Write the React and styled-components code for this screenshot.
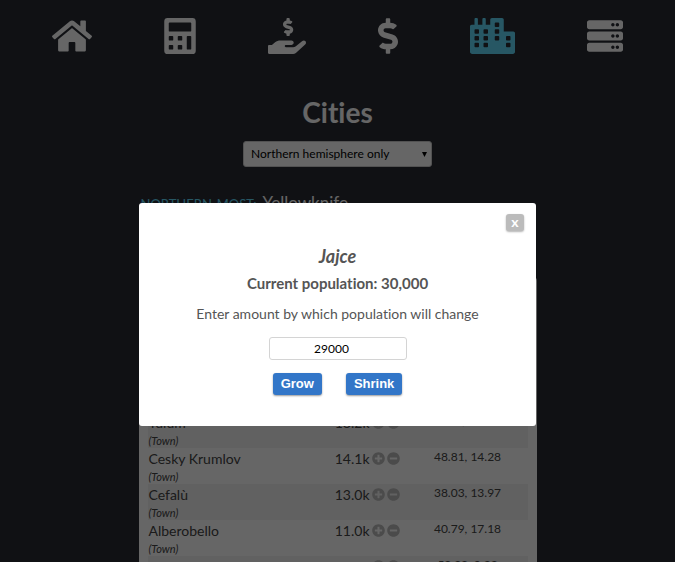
import React from "react";
import styled, { createGlobalStyle, css } from "styled-components";
import {
  FaDollarSign,
  FaCity,
  FaServer,
  FaPlusCircle,
  FaMinusCircle,
} from "react-icons/fa";

const GlobalStyle = createGlobalStyle`
  * { box-sizing: border-box; }
  html, body, #root { height: 100%; }
  body {
    margin: 0;
    overflow: hidden;
    background: #282c34;
    font-family: Lato, sans-serif;
    font-variant-ligatures: none;
  }
`;

const Page = styled.main`
  display: flex;
  flex-direction: column;
  align-items: center;
  color: #fff;
`;

const Nav = styled.nav`
  align-self: stretch;
  display: flex;
  justify-content: space-around;
  padding: 18px 16px 0;
`;

const NavLink = styled.a`
  display: flex;
  color: ${(p) => (p.$active ? "#61dafb" : "#fff")};
  svg {
    height: 36px;
    width: ${(p) => p.$width}px;
  }
`;

const Title = styled.h1`
  margin: 40px 0 0;
  font-size: 28px;
  line-height: 36px;
`;

const SelectWrap = styled.div`
  display: grid;
  align-items: center;
  margin-top: 11px;
  width: 189px;
  color: #000;
  > * {
    grid-area: 1 / 1;
  }
`;

const Select = styled.select`
  appearance: none;
  height: 26px;
  padding: 0 7px 2px;
  border: 1px solid #ccc;
  border-radius: 3px;
  background: #fff;
  color: #000;
  font: 12px Lato, sans-serif;
`;

const Arrow = styled.svg`
  justify-self: end;
  width: 5px;
  height: 5px;
  margin-right: 5px;
  pointer-events: none;
`;

const Summary = styled.div`
  display: flex;
  align-items: baseline;
  gap: 6px;
  width: 396px;
  max-width: 100%;
  height: 85px;
  margin-top: 25px;
  padding-left: 1px;
  font-size: 17px;
  line-height: 22px;
`;

const SummaryLabel = styled.span`
  color: #61dafb;
  font-size: 13px;
  text-transform: uppercase;
`;

const Panel = styled.section`
  width: 398px;
  max-width: 100%;
  padding: 27px 9px 16px;
  border-radius: 4px;
  background: #fff;
  color: #444;
`;

const Table = styled.table`
  width: 100%;
  table-layout: fixed;
  border-collapse: collapse;
`;

const Row = styled.tr`
  height: 36px;
  &:nth-child(even) {
    background: #f2f2f2;
  }
`;

const cell = css`
  padding: 0;
  vertical-align: top;
  font-weight: 400;
  line-height: 21px;
`;

const NameCell = styled.th`
  ${cell}
  width: 160px;
  padding-left: 1px;
  text-align: left;
  font-size: 14px;
`;

const Kind = styled.em`
  display: block;
  font-size: 11px;
  line-height: 15px;
`;

const PopulationCell = styled.td`
  ${cell}
  width: 100px;
  font-size: 14px;
`;

const Population = styled.div`
  display: flex;
  align-items: center;
  justify-content: flex-end;
  gap: 2px;
  padding-right: 8px;
`;

const StepButton = styled.button`
  display: flex;
  padding: 0;
  border: 0;
  background: none;
  color: #bbb;
  font-size: 13px;
`;

const CoordCell = styled.td`
  ${cell}
  font-size: 12px;
  line-height: 18px;
  text-align: center;
`;

const Overlay = styled.div`
  position: fixed;
  inset: 0;
  display: flex;
  align-items: flex-start;
  justify-content: center;
  padding-top: 203px;
  background: rgba(0, 0, 0, 0.6);
`;

const Modal = styled.form`
  display: flex;
  flex-direction: column;
  align-items: center;
  width: 397px;
  max-width: 100%;
  padding: 11px 12px 31px;
  border-radius: 3px;
  background: #fff;
  color: #555;
`;

const CloseButton = styled.button`
  align-self: flex-end;
  width: 18px;
  height: 17px;
  padding: 0 0 2px;
  border: 0;
  border-radius: 3px;
  background: #bbb;
  box-shadow: 0 1px 2px rgba(0, 0, 0, 0.3);
  color: #fff;
  font: bold 14px/14px Lato, sans-serif;
`;

const CityName = styled.h2`
  margin: 13px 0 0;
  font-size: 18px;
  font-style: italic;
  line-height: 24px;
`;

const Current = styled.h3`
  margin: 3px 0 0;
  font-size: 15px;
  line-height: 24px;
`;

const Prompt = styled.label`
  margin-top: 8px;
  font-size: 14px;
  line-height: 22px;
`;

const Amount = styled.input`
  width: 138px;
  height: 23px;
  margin-top: 12px;
  padding: 0 12px 0 0;
  border: 1px solid #d4d4d4;
  border-radius: 3px;
  color: #000;
  font: 12px Lato, sans-serif;
  text-align: center;
`;

const Actions = styled.div`
  display: flex;
  gap: 24px;
  margin-top: 13px;
`;

const ActionButton = styled.button`
  height: 22px;
  padding: 0 8px 2px;
  border: 0;
  border-radius: 3px;
  background: #3276c8;
  box-shadow: 0 1px 2px rgba(0, 0, 0, 0.4);
  color: #fff;
  font: bold 13px "Liberation Sans", sans-serif;
`;

const HomeIcon = () => (
  <svg viewBox="0 0 576 512" fill="currentColor" aria-hidden="true">
    <path d="M488 312.7V456c0 13.3-10.7 24-24 24H348c-6.6 0-12-5.4-12-12V356c0-6.6-5.4-12-12-12h-72c-6.6 0-12 5.4-12 12v112c0 6.6-5.4 12-12 12H112c-13.3 0-24-10.7-24-24V312.7c0-3.6 1.6-7 4.4-9.3l188-154.8c4.4-3.6 10.8-3.6 15.3 0l188 154.8c2.7 2.3 4.3 5.7 4.3 9.3zm83.6-60.9L488 182.9V44.4c0-6.6-5.4-12-12-12h-56c-6.6 0-12 5.4-12 12V117l-89.5-73.7c-17.7-14.6-43.3-14.6-61 0L4.4 251.8c-5.1 4.2-5.8 11.8-1.6 16.9l25.5 31c4.2 5.1 11.8 5.8 16.9 1.6l235.2-193.7c4.4-3.6 10.8-3.6 15.3 0l235.2 193.7c5.1 4.2 12.7 3.5 16.9-1.6l25.5-31c4.2-5.2 3.4-12.7-1.7-16.9z" />
  </svg>
);

const CalculatorIcon = () => (
  <svg viewBox="0 0 448 512" fill="currentColor" fillRule="evenodd" aria-hidden="true">
    <path d="M48 0h352a48 48 0 0 1 48 48v416a48 48 0 0 1-48 48H48a48 48 0 0 1-48-48V48A48 48 0 0 1 48 0zM76 64a12 12 0 0 0-12 12v104a12 12 0 0 0 12 12h296a12 12 0 0 0 12-12V76a12 12 0 0 0-12-12zM76 256a12 12 0 0 0-12 12v40a12 12 0 0 0 12 12h40a12 12 0 0 0 12-12v-40a12 12 0 0 0-12-12zM204 256a12 12 0 0 0-12 12v40a12 12 0 0 0 12 12h40a12 12 0 0 0 12-12v-40a12 12 0 0 0-12-12zM76 384a12 12 0 0 0-12 12v40a12 12 0 0 0 12 12h40a12 12 0 0 0 12-12v-40a12 12 0 0 0-12-12zM204 384a12 12 0 0 0-12 12v40a12 12 0 0 0 12 12h40a12 12 0 0 0 12-12v-40a12 12 0 0 0-12-12zM332 256a12 12 0 0 0-12 12v168a12 12 0 0 0 12 12h40a12 12 0 0 0 12-12V268a12 12 0 0 0-12-12z" />
  </svg>
);

const HandIcon = () => (
  <svg viewBox="0 0 544 512" fill="currentColor" aria-hidden="true">
    <path d="M257.6 144.3l50 14.3c3.6 1 6.1 4.4 6.1 8.1 0 4.6-3.8 8.4-8.4 8.4h-32.8c-3.6 0-7.1-.8-10.3-2.2-4.8-2.2-10.4-1.7-14.1 2l-17.5 17.5c-5.3 5.3-4.7 14.3 1.5 18.4 9.5 6.3 20.3 10.1 31.8 11.5V240c0 8.8 7.2 16 16 16h16c8.8 0 16-7.2 16-16v-17.6c30.3-3.6 53.3-31 49.3-63-2.9-23-20.7-41.3-42.9-47.7l-50-14.3c-3.6-1-6.1-4.4-6.1-8.1 0-4.6 3.8-8.4 8.4-8.4h32.8c3.6 0 7.1.8 10.3 2.2 4.8 2.2 10.4 1.7 14.1-2l17.5-17.5c5.3-5.3 4.7-14.3-1.5-18.4-9.5-6.3-20.3-10.1-31.8-11.5V16c0-8.8-7.2-16-16-16h-16c-8.8 0-16 7.2-16 16v17.6c-30.3 3.6-53.3 31-49.3 63 2.9 23 20.6 41.3 42.9 47.7z" />
    <path d="M533.9 328.1c-11.8-10.7-30.2-10-42.6 0L399 402c-11.3 9.1-25.4 14-40 14H256c-8.8 0-16-7.2-16-16s7.2-16 16-16h78.3c15.9 0 30.7-10.9 33.3-26.6C370.9 337.4 355.5 320 336 320H176c-27 0-53.1 9.3-74.1 26.3L55.4 384H16c-8.8 0-16 7.2-16 16v96c0 8.8 7.2 16 16 16h343c14.5 0 28.6-4.9 40-14l132.9-120.3c15.1-13.4 16.4-36 2-49.6z" />
  </svg>
);

const links = [
  { label: "Home", Icon: HomeIcon, width: 40 },
  { label: "Calculator", Icon: CalculatorIcon, width: 32 },
  { label: "Accounts", Icon: HandIcon, width: 38 },
  { label: "Tax", Icon: FaDollarSign, width: 20 },
  { label: "Cities", Icon: FaCity, width: 45, active: true },
  { label: "Server", Icon: FaServer, width: 36 },
];

const cities = [
  { name: "Jajce", population: "30.0k", coords: "44.34, 17.27" },
  { name: "Yellowknife", population: "19.6k", coords: "62.45, -114.37" },
  { name: "Banff", population: "18.9k", coords: "51.18, -115.57" },
  { name: "Tulum", population: "18.2k", coords: "20.21, -87.46" },
  { name: "Cesky Krumlov", population: "14.1k", coords: "48.81, 14.28" },
  { name: "Cefalù", population: "13.0k", coords: "38.03, 13.97" },
  { name: "Alberobello", population: "11.0k", coords: "40.79, 17.18" },
  { name: "Sigl", population: "11.0k", coords: "52.22, 0.22" },
];

export default function App() {
  return (
    <>
      <GlobalStyle />
      <Page>
        <Nav>
          {links.map(({ label, Icon, width, active }) => (
            <NavLink
              key={label}
              href="#"
              aria-label={label}
              $width={width}
              $active={active}
            >
              <Icon />
            </NavLink>
          ))}
        </Nav>
        <Title>Cities</Title>
        <SelectWrap>
          <Select aria-label="Hemisphere" defaultValue="north">
            <option value="north">Northern hemisphere only</option>
          </Select>
          <Arrow viewBox="0 0 5 5" aria-hidden="true">
            <path d="M0 0h5L2.5 5z" />
          </Arrow>
        </SelectWrap>
        <Summary>
          <SummaryLabel>Northern-most:</SummaryLabel>
          <span>Yellowknife</span>
        </Summary>
        <Panel>
          <Table>
            <tbody>
              {cities.map((city) => (
                <Row key={city.name}>
                  <NameCell scope="row">
                    {city.name}
                    <Kind>(Town)</Kind>
                  </NameCell>
                  <PopulationCell>
                    <Population>
                      {city.population}
                      <StepButton aria-label={`Grow ${city.name}`}>
                        <FaPlusCircle />
                      </StepButton>
                      <StepButton aria-label={`Shrink ${city.name}`}>
                        <FaMinusCircle />
                      </StepButton>
                    </Population>
                  </PopulationCell>
                  <CoordCell>{city.coords}</CoordCell>
                </Row>
              ))}
            </tbody>
          </Table>
        </Panel>
      </Page>
      <Overlay>
        <Modal role="dialog" aria-labelledby="city-name">
          <CloseButton type="button" aria-label="Close">x</CloseButton>
          <CityName id="city-name">Jajce</CityName>
          <Current>Current population: 30,000</Current>
          <Prompt htmlFor="amount">Enter amount by which population will change</Prompt>
          <Amount id="amount" defaultValue="29000" inputMode="numeric" />
          <Actions>
            <ActionButton type="button">Grow</ActionButton>
            <ActionButton type="button">Shrink</ActionButton>
          </Actions>
        </Modal>
      </Overlay>
    </>
  );
}
